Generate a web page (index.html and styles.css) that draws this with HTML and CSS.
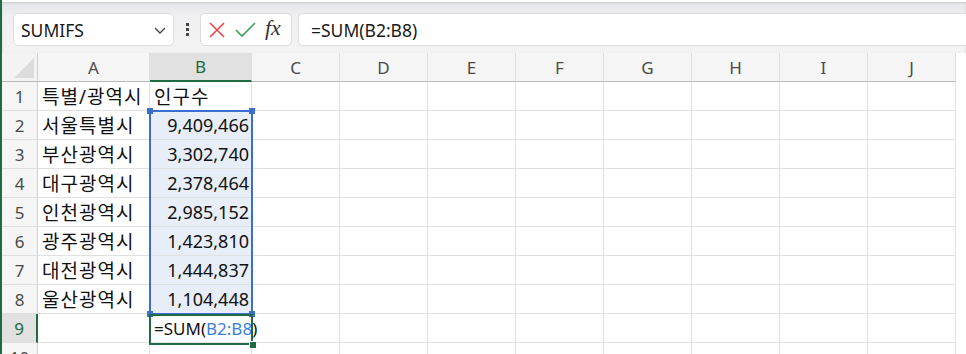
FILE: index.html
```html
<!DOCTYPE html>
<html lang="ko">
<head>
  <meta charset="UTF-8">
  <title>Sheet</title>
  <link rel="stylesheet" href="styles.css">
</head>
<body>
  <div class="app">
    <div class="formula-bar">
      <div class="name-box">
        <span class="name-text">SUMIFS</span>
        <svg class="chevron" width="14" height="14" viewBox="0 0 14 14"><path d="M2 5 L7 10 L12 5" fill="none" stroke="#444" stroke-width="1.4"/></svg>
      </div>
      <div class="grip"><span></span><span></span><span></span></div>
      <div class="fx-box">
        <svg width="18" height="18" viewBox="0 0 18 18"><path d="M2 2 L16 16 M16 2 L2 16" stroke="#e34848" stroke-width="1.6" fill="none"/></svg>
        <svg width="21" height="18" viewBox="0 0 21 18"><path d="M1 9 L7 15 L20 2" stroke="#3aa05a" stroke-width="1.6" fill="none"/></svg>
        <span class="fx">fx</span>
      </div>
      <div class="formula-input">=SUM(B2:B8)</div>
    </div>

    <div class="sheet">
      <div class="grid">
        <div class="corner"><span class="tri"></span></div>
        <div class="col-head">A</div>
        <div class="col-head active">B</div>
        <div class="col-head">C</div>
        <div class="col-head">D</div>
        <div class="col-head">E</div>
        <div class="col-head">F</div>
        <div class="col-head">G</div>
        <div class="col-head">H</div>
        <div class="col-head">I</div>
        <div class="col-head">J</div>

        <div class="row-head">1</div>
        <div class="cell ko">특별/광역시</div>
        <div class="cell ko">인구수</div>
        <div class="cell"></div><div class="cell"></div><div class="cell"></div><div class="cell"></div><div class="cell"></div><div class="cell"></div><div class="cell"></div><div class="cell"></div>

        <div class="row-head">2</div>
        <div class="cell ko">서울특별시</div>
        <div class="cell num sel">9,409,466</div>
        <div class="cell"></div><div class="cell"></div><div class="cell"></div><div class="cell"></div><div class="cell"></div><div class="cell"></div><div class="cell"></div><div class="cell"></div>

        <div class="row-head">3</div>
        <div class="cell ko">부산광역시</div>
        <div class="cell num sel">3,302,740</div>
        <div class="cell"></div><div class="cell"></div><div class="cell"></div><div class="cell"></div><div class="cell"></div><div class="cell"></div><div class="cell"></div><div class="cell"></div>

        <div class="row-head">4</div>
        <div class="cell ko">대구광역시</div>
        <div class="cell num sel">2,378,464</div>
        <div class="cell"></div><div class="cell"></div><div class="cell"></div><div class="cell"></div><div class="cell"></div><div class="cell"></div><div class="cell"></div><div class="cell"></div>

        <div class="row-head">5</div>
        <div class="cell ko">인천광역시</div>
        <div class="cell num sel">2,985,152</div>
        <div class="cell"></div><div class="cell"></div><div class="cell"></div><div class="cell"></div><div class="cell"></div><div class="cell"></div><div class="cell"></div><div class="cell"></div>

        <div class="row-head">6</div>
        <div class="cell ko">광주광역시</div>
        <div class="cell num sel">1,423,810</div>
        <div class="cell"></div><div class="cell"></div><div class="cell"></div><div class="cell"></div><div class="cell"></div><div class="cell"></div><div class="cell"></div><div class="cell"></div>

        <div class="row-head">7</div>
        <div class="cell ko">대전광역시</div>
        <div class="cell num sel">1,444,837</div>
        <div class="cell"></div><div class="cell"></div><div class="cell"></div><div class="cell"></div><div class="cell"></div><div class="cell"></div><div class="cell"></div><div class="cell"></div>

        <div class="row-head">8</div>
        <div class="cell ko">울산광역시</div>
        <div class="cell num sel">1,104,448</div>
        <div class="cell"></div><div class="cell"></div><div class="cell"></div><div class="cell"></div><div class="cell"></div><div class="cell"></div><div class="cell"></div><div class="cell"></div>

        <div class="row-head active">9</div>
        <div class="cell"></div>
        <div class="cell editing">=SUM(<span class="ref">B2:B8</span>)</div>
        <div class="cell"></div><div class="cell"></div><div class="cell"></div><div class="cell"></div><div class="cell"></div><div class="cell"></div><div class="cell"></div><div class="cell"></div>

        <div class="row-head">10</div>
        <div class="cell"></div><div class="cell"></div><div class="cell"></div><div class="cell"></div><div class="cell"></div><div class="cell"></div><div class="cell"></div><div class="cell"></div><div class="cell"></div><div class="cell"></div>
      </div>

      <!-- range highlight and active cell sit over the grid -->
      <div class="range-box">
        <span class="handle tl"></span><span class="handle tr"></span>
        <span class="handle bl"></span><span class="handle br"></span>
      </div>
      <div class="active-box"><span class="handle-green"></span></div>
    </div>
  </div>
</body>
</html>
```

FILE: styles.css
```css
body {
  margin: 0;
  background: #fff;
  font-family: "Noto Sans", "Noto Sans CJK KR", sans-serif;
  color: #222;
  overflow: hidden;
}

.app {
  width: 966px;
  height: 354px;
  overflow: hidden;
  border-left: 2px solid #1f6b45;
  box-sizing: border-box;
  background: #f3f3f3;
}

/* formula bar */
.formula-bar {
  height: 53px;
  display: flex;
  align-items: center;
  padding: 0 0 0 11px;
  box-sizing: border-box;
  background: linear-gradient(#e4e5e8, #f0f0f2 30%, #f3f3f3);
  border-top: 2px solid #fff;
  box-shadow: inset 0 1px 2px #c8c8cc;
}
.name-box {
  width: 161px;
  height: 33px;
  box-sizing: border-box;
  background: #fff;
  border: 1px solid #dcdcdc;
  border-radius: 5px;
  display: flex;
  align-items: center;
  justify-content: space-between;
  padding: 0 6px 0 7px;
  margin-top: 4px;
}
.name-text {
  font-size: 17.5px;
  color: #1a1a1a;
}
.grip {
  width: 26px;
  display: flex;
  flex-direction: column;
  align-items: center;
  gap: 2px;
  margin-top: 4px;
}
.grip span {
  width: 3px;
  height: 3px;
  background: #444;
}
.fx-box {
  width: 92px;
  height: 33px;
  box-sizing: border-box;
  background: #fff;
  border: 1px solid #dcdcdc;
  border-radius: 5px;
  display: flex;
  align-items: center;
  gap: 9px;
  padding: 0 0 0 7px;
  margin-top: 4px;
}
.fx {
  font-family: "Liberation Serif", serif;
  font-style: italic;
  font-size: 22px;
  color: #333;
  margin-top: -3px;
}
.formula-input {
  flex: 1;
  height: 33px;
  box-sizing: border-box;
  background: #fff;
  border: 1px solid #dcdcdc;
  border-right: none;
  border-radius: 5px 0 0 5px;
  margin-left: 6px;
  margin-top: 4px;
  padding: 0 0 0 12px;
  display: flex;
  align-items: center;
  font-size: 17.5px;
  color: #1a1a1a;
}

/* sheet */
.sheet {
  position: relative;
  background: #fff;
}
.grid {
  display: grid;
  grid-template-columns: 36px 112px 102px repeat(8, 88px);
  grid-auto-rows: 29px;
}
.grid > div {
  box-sizing: border-box;
}
.corner {
  background: #f3f3f3;
  border-right: 1px solid #cfcfcf;
  border-bottom: 1px solid #b8b8b8;
  position: relative;
}
.tri {
  position: absolute;
  right: 3px;
  bottom: 3px;
  width: 0;
  height: 0;
  border-left: 20px solid transparent;
  border-bottom: 20px solid #dcdcdc;
}
.col-head {
  background: #f5f5f5;
  border-right: 1px solid #dedede;
  border-bottom: 1px solid #b8b8b8;
  display: flex;
  align-items: center;
  justify-content: center;
  font-size: 17px;
  color: #4a4a4a;
}
.col-head.active {
  background: #e1e1e1;
  color: #1d6b40;
  border-bottom: 2px solid #1f6b45;
}
.row-head {
  background: #f5f5f5;
  border-right: 1px solid #cfcfcf;
  border-bottom: 1px solid #dedede;
  display: flex;
  align-items: center;
  justify-content: center;
  font-size: 17px;
  color: #4a4a4a;
}
.row-head.active {
  background: #e1e1e1;
  color: #1d6b40;
  border-right: 2px solid #1f6b45;
}
.cell {
  border-right: 1px solid #e1e1e1;
  border-bottom: 1px solid #e1e1e1;
  display: flex;
  align-items: center;
  padding: 0 2px 0 4px;
  font-size: 18px;
  color: #111;
  white-space: nowrap;
}
.cell.ko {
  font-size: 19px;
  letter-spacing: 1px;
}
.cell.num {
  justify-content: flex-end;
}
.cell.sel {
  background: #e8eef8;
}
.cell.editing {
  padding-left: 4px;
  font-size: 17px;
}
.ref {
  color: #3b7fd9;
}

.range-box {
  position: absolute;
  left: 147px;
  top: 57px;
  width: 104px;
  height: 205px;
  border: 2px solid #3a6fcf;
  box-sizing: border-box;
}
.handle {
  position: absolute;
  width: 6px;
  height: 6px;
  background: #3a6fcf;
}
.handle.tl { left: -4px; top: -4px; }
.handle.tr { right: -4px; top: -4px; }
.handle.bl { left: -4px; bottom: -4px; }
.handle.br { right: -4px; bottom: -4px; }

.active-box {
  position: absolute;
  left: 147px;
  top: 261px;
  width: 104px;
  height: 31px;
  border: 2px solid #1f6b45;
  box-sizing: border-box;
}
.handle-green {
  position: absolute;
  right: -5px;
  bottom: -5px;
  width: 6px;
  height: 6px;
  background: #1f6b45;
  border-left: 1px solid #fff;
  border-top: 1px solid #fff;
}
```
